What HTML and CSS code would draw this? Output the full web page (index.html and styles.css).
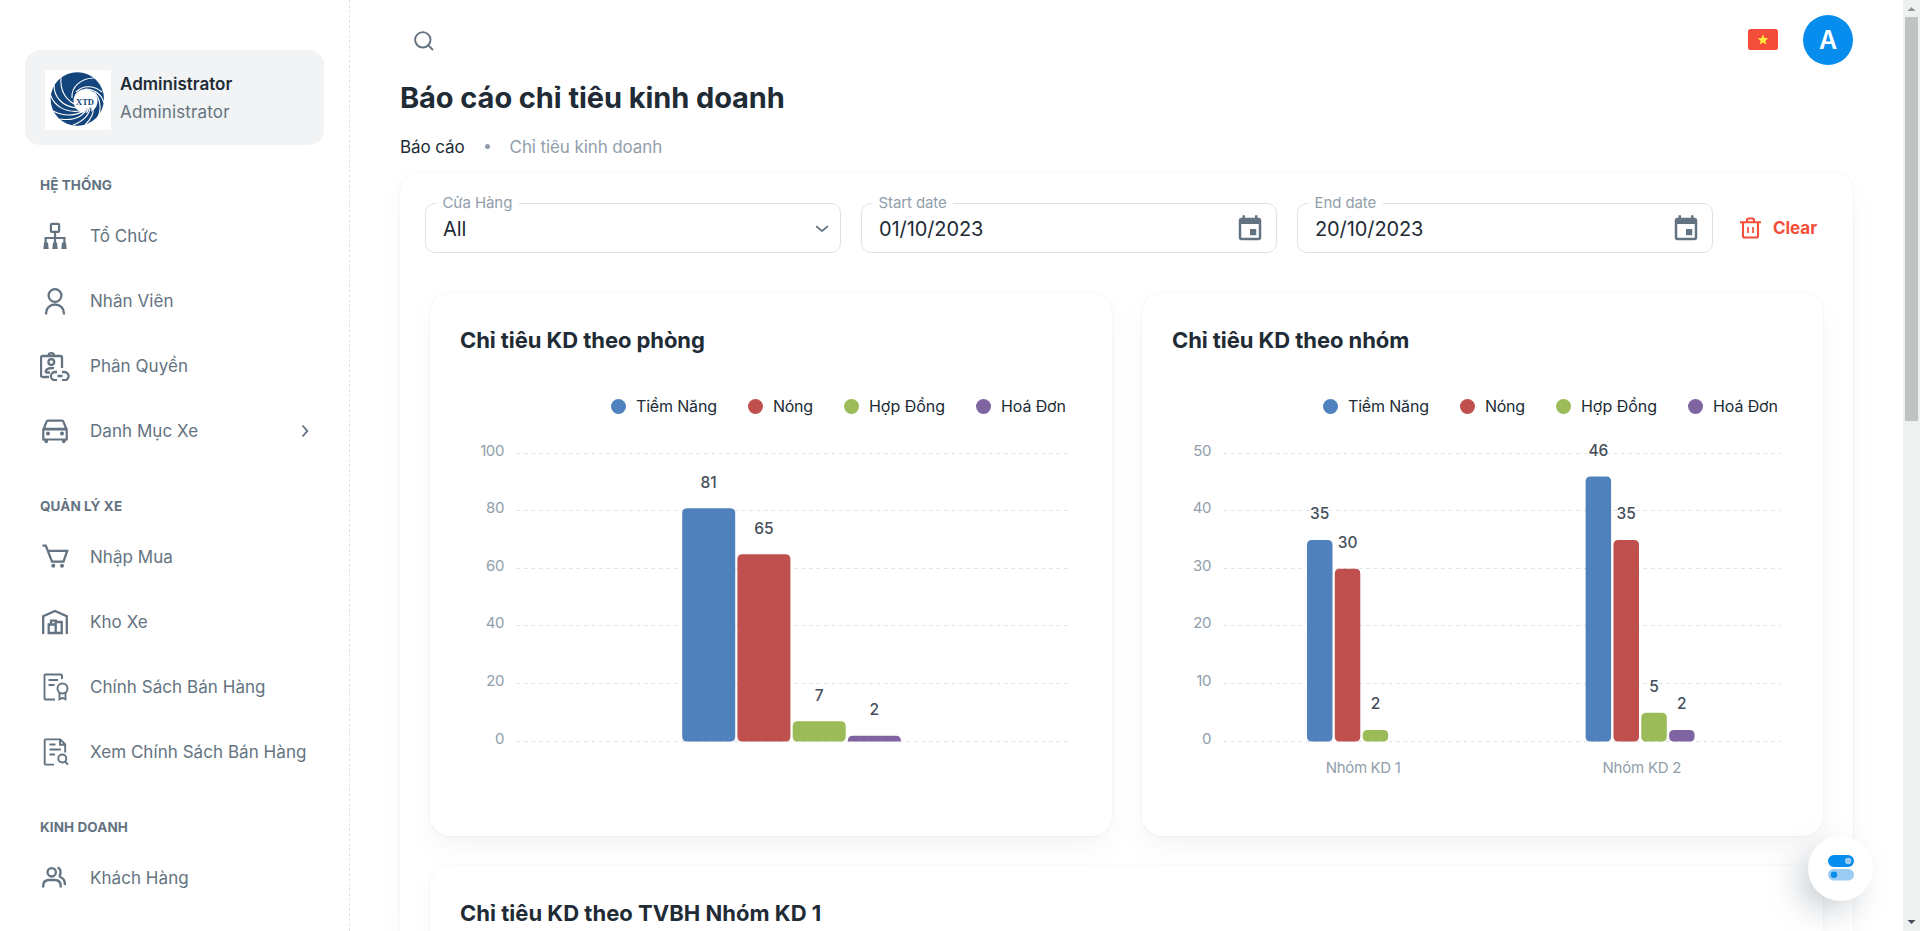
FILE: index.html
```html
<!DOCTYPE html>
<html lang="vi">
<head>
<meta charset="utf-8">
<title>Báo cáo chỉ tiêu kinh doanh</title>
<link rel="stylesheet" href="styles.css">
</head>
<body>
<div class="app">
  <aside class="sidebar">
    <div class="profile">
      <svg class="logo" viewBox="0 0 66 60">
        <rect width="66" height="60" fill="#fff"/>
        <circle cx="32.3" cy="29" r="26.700" fill="#13457c"/>
        <circle cx="40.500" cy="31" r="12" fill="#fff"/>
        <path d="M44.500 37q-2 9-10 17l5 1q7-8 7-17zM41.500 38q-4 8-12 11l3 1q8-4 10-11z" fill="#13457c"/>
        <g fill="none" stroke="#fff" stroke-width="1.100">
          <path d="M27 28C26 17 36 8 49 8"/>
          <path d="M31 22C39 14 50 16 57 22"/>
          <path d="M40 19C50 19 57 25 59 33"/>
          <path d="M49 22C55 28 57 38 53 47"/>
          <path d="M16 7C15 18 19 28 29 34"/>
          <path d="M9 15C9 27 17 36 31 38"/>
          <path d="M5.500 25C9 36 21 43 35 41"/>
          <path d="M8 41C20 47 33 46 41 39"/>
          <path d="M15 49C28 51 38 47 43 37"/>
          <path d="M28 55C39 51 45 44 45 37"/>
          <path d="M40 55C46 49 49 43 48 38"/>
        </g>
        <text x="40" y="34.500" text-anchor="middle" class="logo-text">XTD</text>
      </svg>
      <div class="who">
        <div class="who-name">Administrator</div>
        <div class="who-role">Administrator</div>
      </div>
    </div>

    <div class="group">Hệ thống</div>
    <a class="item"><svg class="ico" viewBox="0 0 30 30"><g fill="none" stroke="currentColor" stroke-width="2.200"><rect x="10.900" y="2.900" width="8.200" height="8" rx="1"/><path d="M15 11v12M5.600 23v-6h18.800v6"/></g><path d="M4 21.500h4l.7 6.500H3.300zM13 21.500h4l.7 6.500h-5.400zM22 21.500h4l.7 6.500h-5.400z" fill="currentColor"/></svg><span>Tổ Chức</span></a>
    <a class="item"><svg class="ico" viewBox="0 0 30 30"><g fill="none" stroke="currentColor" stroke-width="2.300"><circle cx="15" cy="9.500" r="6.400"/><path d="M6.100 28.500v-1.500c0-5 4-8.500 8.900-8.500s8.900 3.500 8.900 8.500v1.500"/></g></svg><span>Nhân Viên</span></a>
    <a class="item"><svg class="ico" viewBox="0 0 30 30"><g fill="none" stroke="currentColor" stroke-width="2.300"><path d="M9 26H2.500a1.500 1.500 0 0 1-1.500-1.500V6.500A1.500 1.500 0 0 1 2.500 5H20.500A1.500 1.500 0 0 1 22 6.500V17"/><path d="M8.500 5a2.800 2.800 0 0 1 5.600 0"/><circle cx="11.300" cy="11" r="2.900"/><path d="M5.500 21.500c0-3.500 4-5 8.500-4.300M5.500 21.500H10"/><path d="M17 21h-2a4.100 4.100 0 0 0 0 8.200h2M22 21h2.500a4.100 4.100 0 0 1 0 8.200H22M17.500 25h5"/></g></svg><span>Phân Quyền</span></a>
    <a class="item"><svg class="ico" viewBox="0 0 30 30"><g fill="none" stroke="currentColor" stroke-width="2.200"><path d="M3.300 13.500h23.400v10H3.300zM3.500 13.500L6.600 5.600q.4-1 1.500-1h13.800q1.100 0 1.500 1l3.100 7.900M5 12.800h20"/></g><g fill="currentColor"><circle cx="8" cy="17.500" r="2"/><circle cx="22" cy="17.500" r="2"/><path d="M3 23h5v2.500a1.700 1.700 0 0 1-3.500 0zM22 23h5l-1.500 2.500a1.700 1.700 0 0 1-3.500 0z"/></g></svg><span>Danh Mục Xe</span><svg class="chev" viewBox="0 0 8 14"><path d="M1.500 1.500L6.300 7l-4.800 5.500" fill="none" stroke="currentColor" stroke-width="1.900"/></svg></a>

    <div class="group">Quản lý xe</div>
    <a class="item"><svg class="ico" viewBox="0 0 30 30"><path d="M2.500 3.700H5.800l6.200 16H23.500l3.700-10.900H7.500" fill="none" stroke="currentColor" stroke-width="2.300"/><g fill="currentColor"><circle cx="13.300" cy="23.800" r="2"/><circle cx="22" cy="23.800" r="2"/></g></svg><span>Nhập Mua</span></a>
    <a class="item"><svg class="ico" viewBox="0 0 30 30"><g fill="none" stroke="currentColor" stroke-width="2.300"><path d="M3.200 27V9.200L15 4l11.800 5.200V27"/><path d="M8.700 17.500h7v8.500h-7zM15.700 15h6v11h-6zM11 17v-3.300h5V16"/></g></svg><span>Kho Xe</span></a>
    <a class="item"><svg class="ico" viewBox="0 0 30 30"><g fill="none" stroke="currentColor" stroke-width="1.900"><path d="M22 7V3.500q0-1-1-1H5.500q-1 0-1 1v23q0 1 1 1H15M8.500 8h9.500M8.500 13h6"/><circle cx="22.500" cy="16.500" r="5"/><path d="M19.500 20.500v6.800l3-1.500 3 1.500v-6.800"/></g></svg><span>Chính Sách Bán Hàng</span></a>
    <a class="item"><svg class="ico" viewBox="0 0 30 30"><g fill="none" stroke="currentColor" stroke-width="1.900"><path d="M25.200 15.500V7.500L20.300 2.400H5.700q-1 0-1 1v23.200q0 1 1 1H14M20 2.500v5.200h5M9.500 7.500h6M9.500 12.500h11.300M9.500 17.500h5.500"/><circle cx="22.300" cy="21.500" r="4"/><path d="M25 24.500l3 3.200"/></g></svg><span>Xem Chính Sách Bán Hàng</span></a>

    <div class="group">Kinh doanh</div>
    <a class="item"><svg class="ico" viewBox="0 0 30 30"><g fill="none" stroke="currentColor" stroke-width="2.300"><circle cx="11.700" cy="9.300" r="4.200"/><path d="M3.200 24.500v-1.500q0-6 6-6h5.500q6 0 6 6v1.500M17.500 4.500q3 1 3 4.500t-1.500 4.500M19 13.500q6 1.500 6 8.500"/></g></svg><span>Khách Hàng</span></a>
  </aside>

  <main class="main">
    <header class="topbar">
      <svg class="search" viewBox="0 0 20 20"><g fill="none" stroke="#637381" stroke-width="1.900"><circle cx="8.800" cy="8.800" r="7.700"/><path d="M14.200 14.200l4.800 4.800"/></g></svg>
      <svg class="flag" viewBox="0 0 30 21"><rect width="30" height="21" rx="2.500" fill="#f44e3b"/><path d="M15 5.500l1.500 3.500 3.800.3-2.900 2.400.9 3.800-3.300-2-3.300 2 .9-3.800-2.900-2.400 3.800-.3z" fill="#ffeb3b"/></svg>
      <div class="avatar">A</div>
    </header>
    <h1 class="title"><span>Báo cáo chỉ tiêu kinh doanh</span></h1>
    <nav class="crumbs"><span class="crumb">Báo cáo</span><i class="dot"></i><span class="crumb current">Chỉ tiêu kinh doanh</span></nav>

    <section class="panel">
      <div class="filters">
        <fieldset class="field"><legend>Cửa Hàng</legend><span>All</span><svg class="caret" viewBox="0 0 14 8"><path d="M1.200 1.200q2 2 5.800 4.800 3.800-2.800 5.800-4.800" fill="none" stroke="#637381" stroke-width="1.800"/></svg></fieldset>
        <fieldset class="field date"><legend>Start date</legend><span>01/10/2023</span><svg class="cal" viewBox="0 0 24 24"><path fill="#637381" d="M17 12h-5v5h5v-5zM16 1v2H8V1H6v2H5c-1.110 0-1.990.9-1.990 2L3 19c0 1.100.89 2 2 2h14c1.100 0 2-.9 2-2V5c0-1.100-.9-2-2-2h-1V1h-2zm3 18H5V8h14v11z"/></svg></fieldset>
        <fieldset class="field date"><legend>End date</legend><span>20/10/2023</span><svg class="cal" viewBox="0 0 24 24"><path fill="#637381" d="M17 12h-5v5h5v-5zM16 1v2H8V1H6v2H5c-1.110 0-1.990.9-1.990 2L3 19c0 1.100.89 2 2 2h14c1.100 0 2-.9 2-2V5c0-1.100-.9-2-2-2h-1V1h-2zm3 18H5V8h14v11z"/></svg></fieldset>
        <button class="clear"><svg viewBox="0 0 21 22"><g fill="none" stroke="currentColor" stroke-width="2.100"><path d="M0 5.300h21M3 5.300V19q0 1.500 1.500 1.500h12Q18 20.500 18 19V5.300M7 5V3q0-1.500 1.500-1.500h4q1.500 0 1.500 1.500v2"/><path d="M8 10v6M13 10v6" stroke-width="1.700"/></g></svg><span>Clear</span></button>
      </div>

      <div class="cards">
        <article class="card">
          <h2><span>Chỉ tiêu KD theo phòng</span></h2>
          <svg class="chart" id="chart-room" viewBox="0 0 682 440"></svg>
        </article>
        <article class="card">
          <h2><span>Chỉ tiêu KD theo nhóm</span></h2>
          <svg class="chart" id="chart-group" viewBox="0 0 682 440"></svg>
        </article>
        <article class="card wide">
          <h2 class="long"><span>Chỉ tiêu KD theo TVBH Nhóm KD 1</span></h2>
        </article>
      </div>
    </section>
  </main>

  <div class="scrollbar"><svg viewBox="0 0 17 17"><path d="M4.500 11h8L8.500 7z" fill="#8f9499"/></svg><div class="thumb"></div><svg viewBox="0 0 17 17"><path d="M4.500 6h8l-4 4z" fill="#454f5b"/></svg></div>
</div>
<button class="fab"><svg viewBox="0 0 26 26"><rect y="0" width="26" height="12" rx="6" fill="#078dee"/><circle cx="20.200" cy="6" r="3.200" fill="#9ccbf2"/><rect y="14" width="26" height="11.500" rx="5.700" fill="#9ccbf2"/><circle cx="6" cy="19.800" r="3.200" fill="#078dee"/></svg></button>
<script src="charts.js"></script>
</body>
</html>
```

FILE: styles.css
```css
* { box-sizing: border-box; }
body {
  margin: 0;
  height: 931px;
  overflow: hidden;
  background: #fff;
  color: #212b36;
  font-family: Inter, "Noto Sans", sans-serif;
}
.app { display: flex; height: 931px; }

.sidebar {
  flex: none;
  width: 350px;
  padding: 50px 24px 0 25px;
  border-right: 1px dashed #dfe3e8;
  color: #637381;
}
.profile {
  display: flex;
  align-items: flex-start;
  width: 299px;
  height: 95px;
  padding: 20px;
  border-radius: 15px;
  background: #f1f3f4;
}
.logo { width: 66px; height: 60px; }
.logo-text { font: bold 8.500px "Liberation Serif", serif; fill: #13457c; }
.who { padding-left: 9px; font-size: 17px; line-height: 28px; }
.who-name { color: #212b36; font-weight: 600; letter-spacing: .02px; }
.who-role { letter-spacing: .15px; }
.group {
  height: 61px;
  padding: 31px 0 0 15px;
  font-size: 13.500px;
  font-weight: 700;
  line-height: 18px;
  letter-spacing: .08px;
  text-transform: uppercase;
}
.item {
  display: flex;
  align-items: center;
  height: 60px;
  margin-bottom: 5px;
  padding: 0 16px 0 15px;
  font-size: 17px;
}
.item span { letter-spacing: .05px; }
.ico { flex: none; width: 30px; height: 30px; margin-right: 20px; }
.chev { width: 8px; height: 14px; margin-left: auto; }

.main { flex: none; width: 1553px; padding: 0 50px; }
.topbar { display: flex; align-items: center; height: 80px; }
.search { width: 20px; height: 20px; margin: 2px 0 0 13.500px; }
.flag { width: 30px; height: 21px; margin: 0 0 1px auto; }
.avatar {
  width: 50px;
  height: 50px;
  margin-left: 25px;
  border-radius: 50%;
  background: #078dee;
  color: #fff;
  font-size: 25px;
  font-weight: 600;
  line-height: 50px;
  text-align: center;
}
.title { margin: 0; height: 48px; font-size: 29px; font-weight: 700; line-height: 35px; letter-spacing: -.08px; }
.crumbs { display: flex; align-items: center; height: 44px; padding-bottom: 7px; font-size: 17px; }
.crumb { letter-spacing: -.1px; }
.crumb.current { color: #919eab; }
.dot { width: 5px; height: 5px; margin: 0 20px; border-radius: 50%; background: #919eab; }

.panel {
  border-radius: 20px 20px 0 0;
  background: #fff;
  box-shadow: 0 0 2px rgba(145,158,171,.2), 0 12px 24px -4px rgba(145,158,171,.12);
}
.filters { display: flex; gap: 20px; height: 121px; padding: 22px 25px 0; }
.field {
  display: flex;
  align-items: center;
  width: 416px;
  height: 59px;
  margin: 0;
  padding: 0 11px 7px 17px;
  border: 1px solid #dce0e4;
  border-radius: 10px;
  font-size: 20px;
}
.field legend { margin-left: -7px; padding: 0 6.500px; color: #919eab; font-size: 15px; line-height: 18px; letter-spacing: -.1px; }
.field span { letter-spacing: -.1px; }
.caret { width: 14px; height: 8px; margin-left: auto; }
.cal { width: 30px; height: 30px; margin-left: auto; }
.clear {
  display: flex;
  align-items: center;
  gap: 12px;
  height: 50px;
  margin: 9px 0 0 7px;
  padding: 0;
  border: 0;
  background: none;
  color: #f44e3b;
  font: 700 17px Inter, sans-serif;
}
.clear svg { width: 21px; height: 22px; }
.clear span { letter-spacing: -.05px; }

.cards { display: grid; grid-template-columns: 682px 681px; gap: 30px; padding-left: 30px; }
.card {
  height: 543px;
  padding-top: 30px;
  border-radius: 20px;
  background: #fff;
  box-shadow: 0 0 2px rgba(145,158,171,.2), 0 12px 24px -4px rgba(145,158,171,.12);
}
.card.wide { grid-column: 1 / 3; height: 65px; border-radius: 20px 20px 0 0; }
.card h2 { margin: 0; padding-left: 30px; font-size: 22px; font-weight: 700; line-height: 34px; letter-spacing: -.07px; }
.card h2.long { letter-spacing: .02px; }
.chart { display: block; width: 682px; height: 440px; margin-top: 1px; }
.legend-text { font-size: 16px; fill: #212b36; }
.axis { font-size: 15px; fill: #919eab; }
.value { font-size: 15.500px; font-weight: 500; fill: #454f5b; text-anchor: middle; }
.grid { stroke: #dfe3e8; stroke-dasharray: 3.750 3.750; }

.scrollbar { display: flex; flex-direction: column; align-items: center; width: 17px; background: #eff1f1; }
.scrollbar svg { width: 17px; height: 17px; }
.thumb { width: 13px; height: 404px; background: #c1c3c3; margin-bottom: auto; }
.fab {
  position: absolute;
  left: 1808px;
  top: 835.500px;
  display: flex;
  align-items: center;
  justify-content: center;
  width: 65px;
  height: 65px;
  border: 0;
  border-radius: 50%;
  background: #fff;
  box-shadow: -12px 12px 32px -4px rgba(99,115,129,.36);
}
.fab svg { width: 26px; height: 26px; flex: none; }
```

FILE: charts.js
```js
const COLORS = ["#4f81bc", "#c0504e", "#9bbb58", "#8064a1"];
const NAMES = [["Tiềm Năng", 81], ["Nóng", 40], ["Hợp Đồng", 76], ["Hoá Đơn", 65]];
const BASE = 383.5, HEIGHT = 288;

function draw(id, cfg) {
  let out = "";
  [188.5, 325.5, 421.5, 553.5].forEach((x, i) => {
    out += `<circle cx="${x}" cy="48.5" r="7.5" fill="${COLORS[i]}"/>`;
    out += `<text class="legend-text" x="${x + 17.5}" y="53.5" textLength="${NAMES[i][1]}">${NAMES[i][0]}</text>`;
  });
  for (let i = 0; i <= 5; i++) {
    const y = Math.round(BASE - HEIGHT * i / 5) - 0.5;
    out += `<line class="grid" x1="${cfg.left}" x2="638.5" y1="${y}" y2="${y}"/>`;
    out += `<text class="axis" text-anchor="end" letter-spacing="-.4" x="${cfg.left - 12.5}" y="${y + 2}">${cfg.max * i / 5}</text>`;
  }
  cfg.bars.forEach(([x, v, c]) => {
    const h = HEIGHT * v / cfg.max, r = Math.min(5, h);
    const b = h < 8 ? 0 : 5, w = cfg.width, t = BASE - h;
    out += `<path fill="${COLORS[c]}" d="M${x} ${t + r}q0-${r} ${r}-${r}h${w - 2 * r}q${r} 0 ${r} ${r}V${BASE - b}q0 ${b}-${b} ${b}H${x + b}q-${b} 0-${b}-${b}z"/>`;
    out += `<text class="value" x="${x + w / 2}" y="${t - 20.5}">${v}</text>`;
  });
  cfg.groups.forEach(([x, w, s]) => {
    out += `<text class="axis" x="${x - w / 2}" y="415" textLength="${w}">${s}</text>`;
  });
  document.getElementById(id).innerHTML = out;
}

draw("chart-room", {
  left: 86.5, max: 100, width: 53, groups: [],
  bars: [[252.2, 81, 0], [307.4, 65, 1], [362.7, 7, 2], [417.9, 2, 3]]
});
draw("chart-group", {
  left: 81.5, max: 50, width: 25.5,
  groups: [[221.3, 75, "Nhóm KD 1"], [500, 79, "Nhóm KD 2"]],
  bars: [[165, 35, 0], [192.8, 30, 1], [220.7, 2, 2], [443.6, 46, 0], [471.5, 35, 1], [499.3, 5, 2], [527.1, 2, 3]]
});
```
